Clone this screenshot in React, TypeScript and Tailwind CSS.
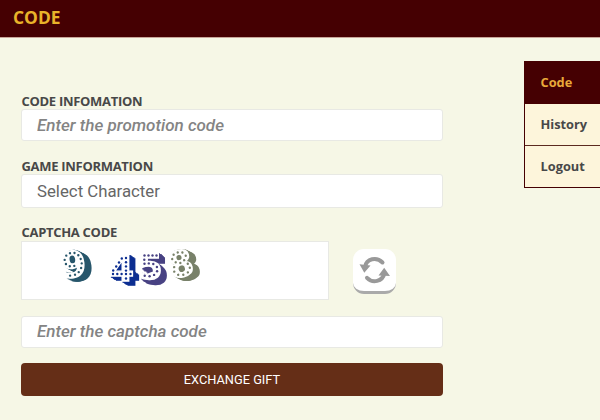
type Digit = {
  value: string;
  cx: number;
  cy: number;
  size: number;
  color: string;
  rotate: number;
  shade: string;
  dots: [number, number][];
};

// Dot positions are relative to the centre of each digit.
const digits: Digit[] = [
  {
    value: '9', cx: 51.5, cy: 22, size: 36, color: '#27566b', rotate: -8,
    shade: '[filter:drop-shadow(1px_0.5px_0_#27566b)_drop-shadow(2px_1px_0_#27566b)_drop-shadow(4px_2px_0_#27566b)]',
    dots: [[-6, -9.3], [-2, -11.2], [2.5, -10.8], [6, -8], [7.8, -4], [8.2, 0.5], [7, 5], [4, 8.8], [0, 10.8], [-5, 11], [-8.2, -5.3], [-7.5, -1], [-4, 1.7], [0.5, 2]],
  },
  {
    value: '4', cx: 99.5, cy: 26, size: 36, color: '#0c2e91', rotate: 0,
    shade: '[filter:drop-shadow(1px_1px_0_#0c2e91)_drop-shadow(2px_1px_0_#0c2e91)_drop-shadow(3px_2px_0_#0c2e91)]',
    dots: [[4.5, -10], [0.3, -9.5], [4.5, -5.8], [4.5, -1.6], [4.5, 2.6], [4.5, 6], [4.5, 10.5], [-2.5, -5.5], [-5.3, -1.5], [-8.3, 2.5], [-8.5, 6], [-4.2, 6], [0.1, 6], [9, 6]],
  },
  {
    value: '5', cx: 128.5, cy: 24, size: 35, color: '#484283', rotate: 0,
    shade: '[filter:drop-shadow(1px_1px_0_#484283)_drop-shadow(2px_2px_0_#484283)_drop-shadow(3px_2px_0_#484283)]',
    dots: [[-6, -10.5], [-2, -10.5], [2, -10.5], [6, -10.5], [-6.2, -6.3], [-6, -2.2], [-1.7, -2.6], [2.8, -2], [6.4, 1], [6.6, 5.3], [3.6, 8.9], [-0.9, 10.2], [-5.8, 9.8]],
  },
  {
    value: '8', cx: 158.5, cy: 21.5, size: 36, color: '#788169', rotate: -14,
    shade: '[filter:drop-shadow(1px_0.5px_0_#788169)_drop-shadow(2px_1px_0_#788169)_drop-shadow(4px_2px_0_#788169)]',
    dots: [[0, -11.4], [-4.5, -10.2], [4.5, -10.2], [-7, -6.3], [7, -6.3], [-4.4, -2.3], [4.4, -2.3], [0, -0.6], [-7, 2], [7, 2], [-8, 6.4], [8, 6.4], [-5, 10.4], [5, 10.4], [0, 11.6]],
  },
];

function Captcha() {
  return (
    <svg className="block" width="306" height="57" viewBox="0 0 306 57">
      {digits.map((d) => (
        <g key={d.value}>
          <g className={d.shade}>
            <text
              className="font-['DejaVu_Sans',sans-serif] font-bold"
              textAnchor="middle"
              x="0"
              y={d.size * 0.364}
              fontSize={d.size}
              fill="#fff"
              stroke="#fff"
              strokeWidth="1.4"
              transform={`translate(${d.cx} ${d.cy}) rotate(${d.rotate})`}
            >
              {d.value}
            </text>
          </g>
          <g transform={`translate(${d.cx} ${d.cy}) rotate(${d.rotate})`}>
            {d.dots.map(([x, y]) => (
              <circle key={`${x}:${y}`} cx={x} cy={y} r="1.2" fill={d.color} />
            ))}
          </g>
        </g>
      ))}
    </svg>
  );
}

const label = "h-[17px] whitespace-nowrap pl-[0.5px] font-['Open_Sans',sans-serif] text-[13px] leading-[19px] font-bold tracking-[-0.3px] text-[#484848]";
const field = "w-[422px] rounded-[3px] border border-[#e8e9e4] bg-white px-[15px] font-['Roboto',sans-serif]";
const entry = "text-[17px] font-medium italic placeholder:text-[#848484]";

export default function App() {
  return (
    <div className="h-[420px] w-[600px] overflow-hidden bg-[#f6f7e6] font-['Open_Sans',sans-serif]">
      <header className="h-[38px] border-b border-[#c9a69a] bg-[#450002] pl-[13px] text-[17.4px] leading-[35px] font-bold text-[#e9b32a]">
        CODE
      </header>
      <div className="flex justify-between">
        <form className="ml-[21px] flex w-[422px] flex-col pt-[54px]">
          <label className={label}>CODE INFOMATION</label>
          <input className={`${field} ${entry} h-[32px]`} placeholder="Enter the promotion code" />
          <label className={`${label} mt-[16px]`}>GAME INFORMATION</label>
          <div className={`${field} h-[34px] text-[16.8px] leading-[32px] text-[#666]`}>Select Character</div>
          <label className={`${label} mt-[15px]`}>CAPTCHA CODE</label>
          <div className="mt-px flex">
            <div className="h-[59px] w-[308px] border border-[#e8e9e4] bg-white">
              <Captcha />
            </div>
            <button type="button" aria-label="Refresh" className="mt-[8px] ml-[24px] flex h-[45px] w-[43px] justify-center rounded-[11px] border-b-[3px] border-[#aaa] bg-white">
              <svg width="43" height="42" viewBox="0 0 43 42" fill="none">
                <path d="M29.5 13.5C23.5 7.5 13.5 9.5 12 18M14 28.8C19.5 34.5 29.5 33 31.5 24" stroke="#999" strokeWidth="4" strokeLinecap="round" />
                <path d="M6.5 15.2L17.5 16.5L11.3 23.8zM25.5 26.5L31.2 18.7L37 27z" fill="#999" />
              </svg>
            </button>
          </div>
          <input className={`${field} ${entry} mt-[16px] h-[32px] pb-[2px]`} placeholder="Enter the captcha code" />
          <button type="button" className="mt-[15px] h-[33px] rounded-[4px] bg-[#652e17] font-['Roboto',sans-serif] text-[12.8px] leading-[33px] text-white">
            EXCHANGE GIFT
          </button>
        </form>
        <nav className="mt-[23px] h-[127px] w-[76px] border-y border-l border-[#450002] bg-[#fdf5db] text-[12.8px] font-bold text-[#484848]">
          <div className="h-[42px] bg-[#450002] pl-[15.5px] leading-[41px] text-[#e9a93a]">Code</div>
          <div className="h-[42px] border-b border-[#5c2a20] pl-[15.5px] leading-[41px]">History</div>
          <div className="h-[41px] pl-[15.5px] leading-[41px]">Logout</div>
        </nav>
      </div>
    </div>
  );
}
